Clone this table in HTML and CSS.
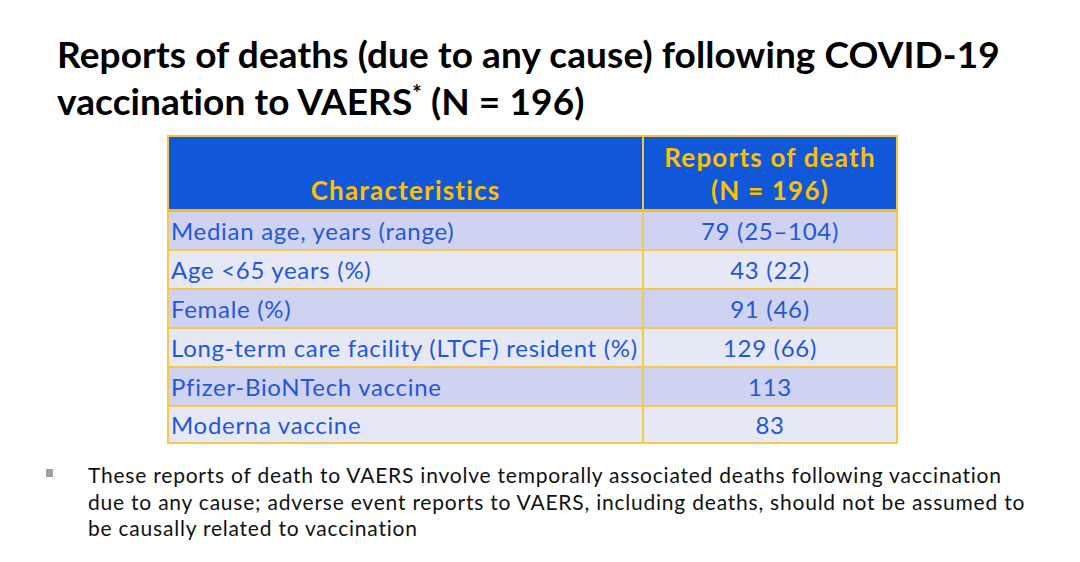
FILE: index.html
```html
<!DOCTYPE html>
<html>
<head>
<meta charset="utf-8">
<link rel="stylesheet" href="styles.css">
</head>
<body>
<div class="slide">
  <h1 class="title">Reports of deaths (due to any cause) following COVID-19<br>vaccination to VAERS<sup class="star">*</sup> (N = 196)</h1>
  <table class="data">
    <thead>
      <tr>
        <th class="col-a">Characteristics</th>
        <th class="col-b">Reports of death<br>(N = 196)</th>
      </tr>
    </thead>
    <tbody>
      <tr class="odd"><td class="col-a">Median age, years (range)</td><td class="col-b">79 (25–104)</td></tr>
      <tr class="even"><td class="col-a">Age &lt;65 years (%)</td><td class="col-b">43 (22)</td></tr>
      <tr class="odd"><td class="col-a">Female (%)</td><td class="col-b">91 (46)</td></tr>
      <tr class="even"><td class="col-a">Long-term care facility (LTCF) resident (%)</td><td class="col-b">129 (66)</td></tr>
      <tr class="odd"><td class="col-a">Pfizer-BioNTech vaccine</td><td class="col-b">113</td></tr>
      <tr class="even last"><td class="col-a">Moderna vaccine</td><td class="col-b">83</td></tr>
    </tbody>
  </table>
  <div class="note">
    <span class="bullet"></span>
    <p class="note-text">These reports of death to VAERS involve temporally associated deaths following vaccination<br>due to any cause; adverse event reports to VAERS, including deaths, should not be assumed to<br>be causally related to vaccination</p>
  </div>
</div>
</body>
</html>
```
FILE: styles.css
```css
html, body {
  margin: 0;
  padding: 0;
  background: #ffffff;
}
.slide {
  width: 1080px;
  height: 562px;
  overflow: hidden;
  font-family: "Lato", "Open Sans", sans-serif;
}
.title {
  margin: 0;
  padding: 30px 0 0 57px;
  font-size: 37px;
  line-height: 47px;
  font-weight: 700;
  letter-spacing: 0.1px;
  color: #000;
}
.star {
  font-size: 22px;
  line-height: 0;
  vertical-align: 14px;
}
.data {
  margin: 11px 0 0 167px;
  width: 731px;
  border-collapse: collapse;
  font-size: 24px;
  letter-spacing: 0.7px;
}
.data th {
  background: #1157d9;
  color: #ffc000;
  font-weight: 700;
  font-size: 26px;
  letter-spacing: 1.2px;
  text-align: center;
  vertical-align: bottom;
  line-height: 33px;
  padding: 4px 0 2px 0;
  border: 2px solid #f8c33c;
  border-bottom: 3px solid #ffc000;
}
.data td {
  color: #1d59d6;
  height: 37px;
  padding: 0 2px;
  border: 2px solid #f8c848;
}
.data .last td { height: 35px; }
.data .col-a { width: 469px; text-align: left; }
.data th.col-a { text-align: center; }
.data td.col-b { text-align: center; }
.odd td { background: #cfd2f0; }
.even td { background: #e7e8f6; }
.note {
  display: flex;
  align-items: flex-start;
  margin: 18px 0 0 46px;
}
.bullet {
  width: 7px;
  height: 8px;
  background: #9aa5a3;
  margin-top: 7px;
  flex: none;
}
.note-text {
  margin: 0 0 0 35px;
  width: 990px;
  font-size: 21px;
  line-height: 26.5px;
  letter-spacing: 0.78px;
  color: #111;
}
```
